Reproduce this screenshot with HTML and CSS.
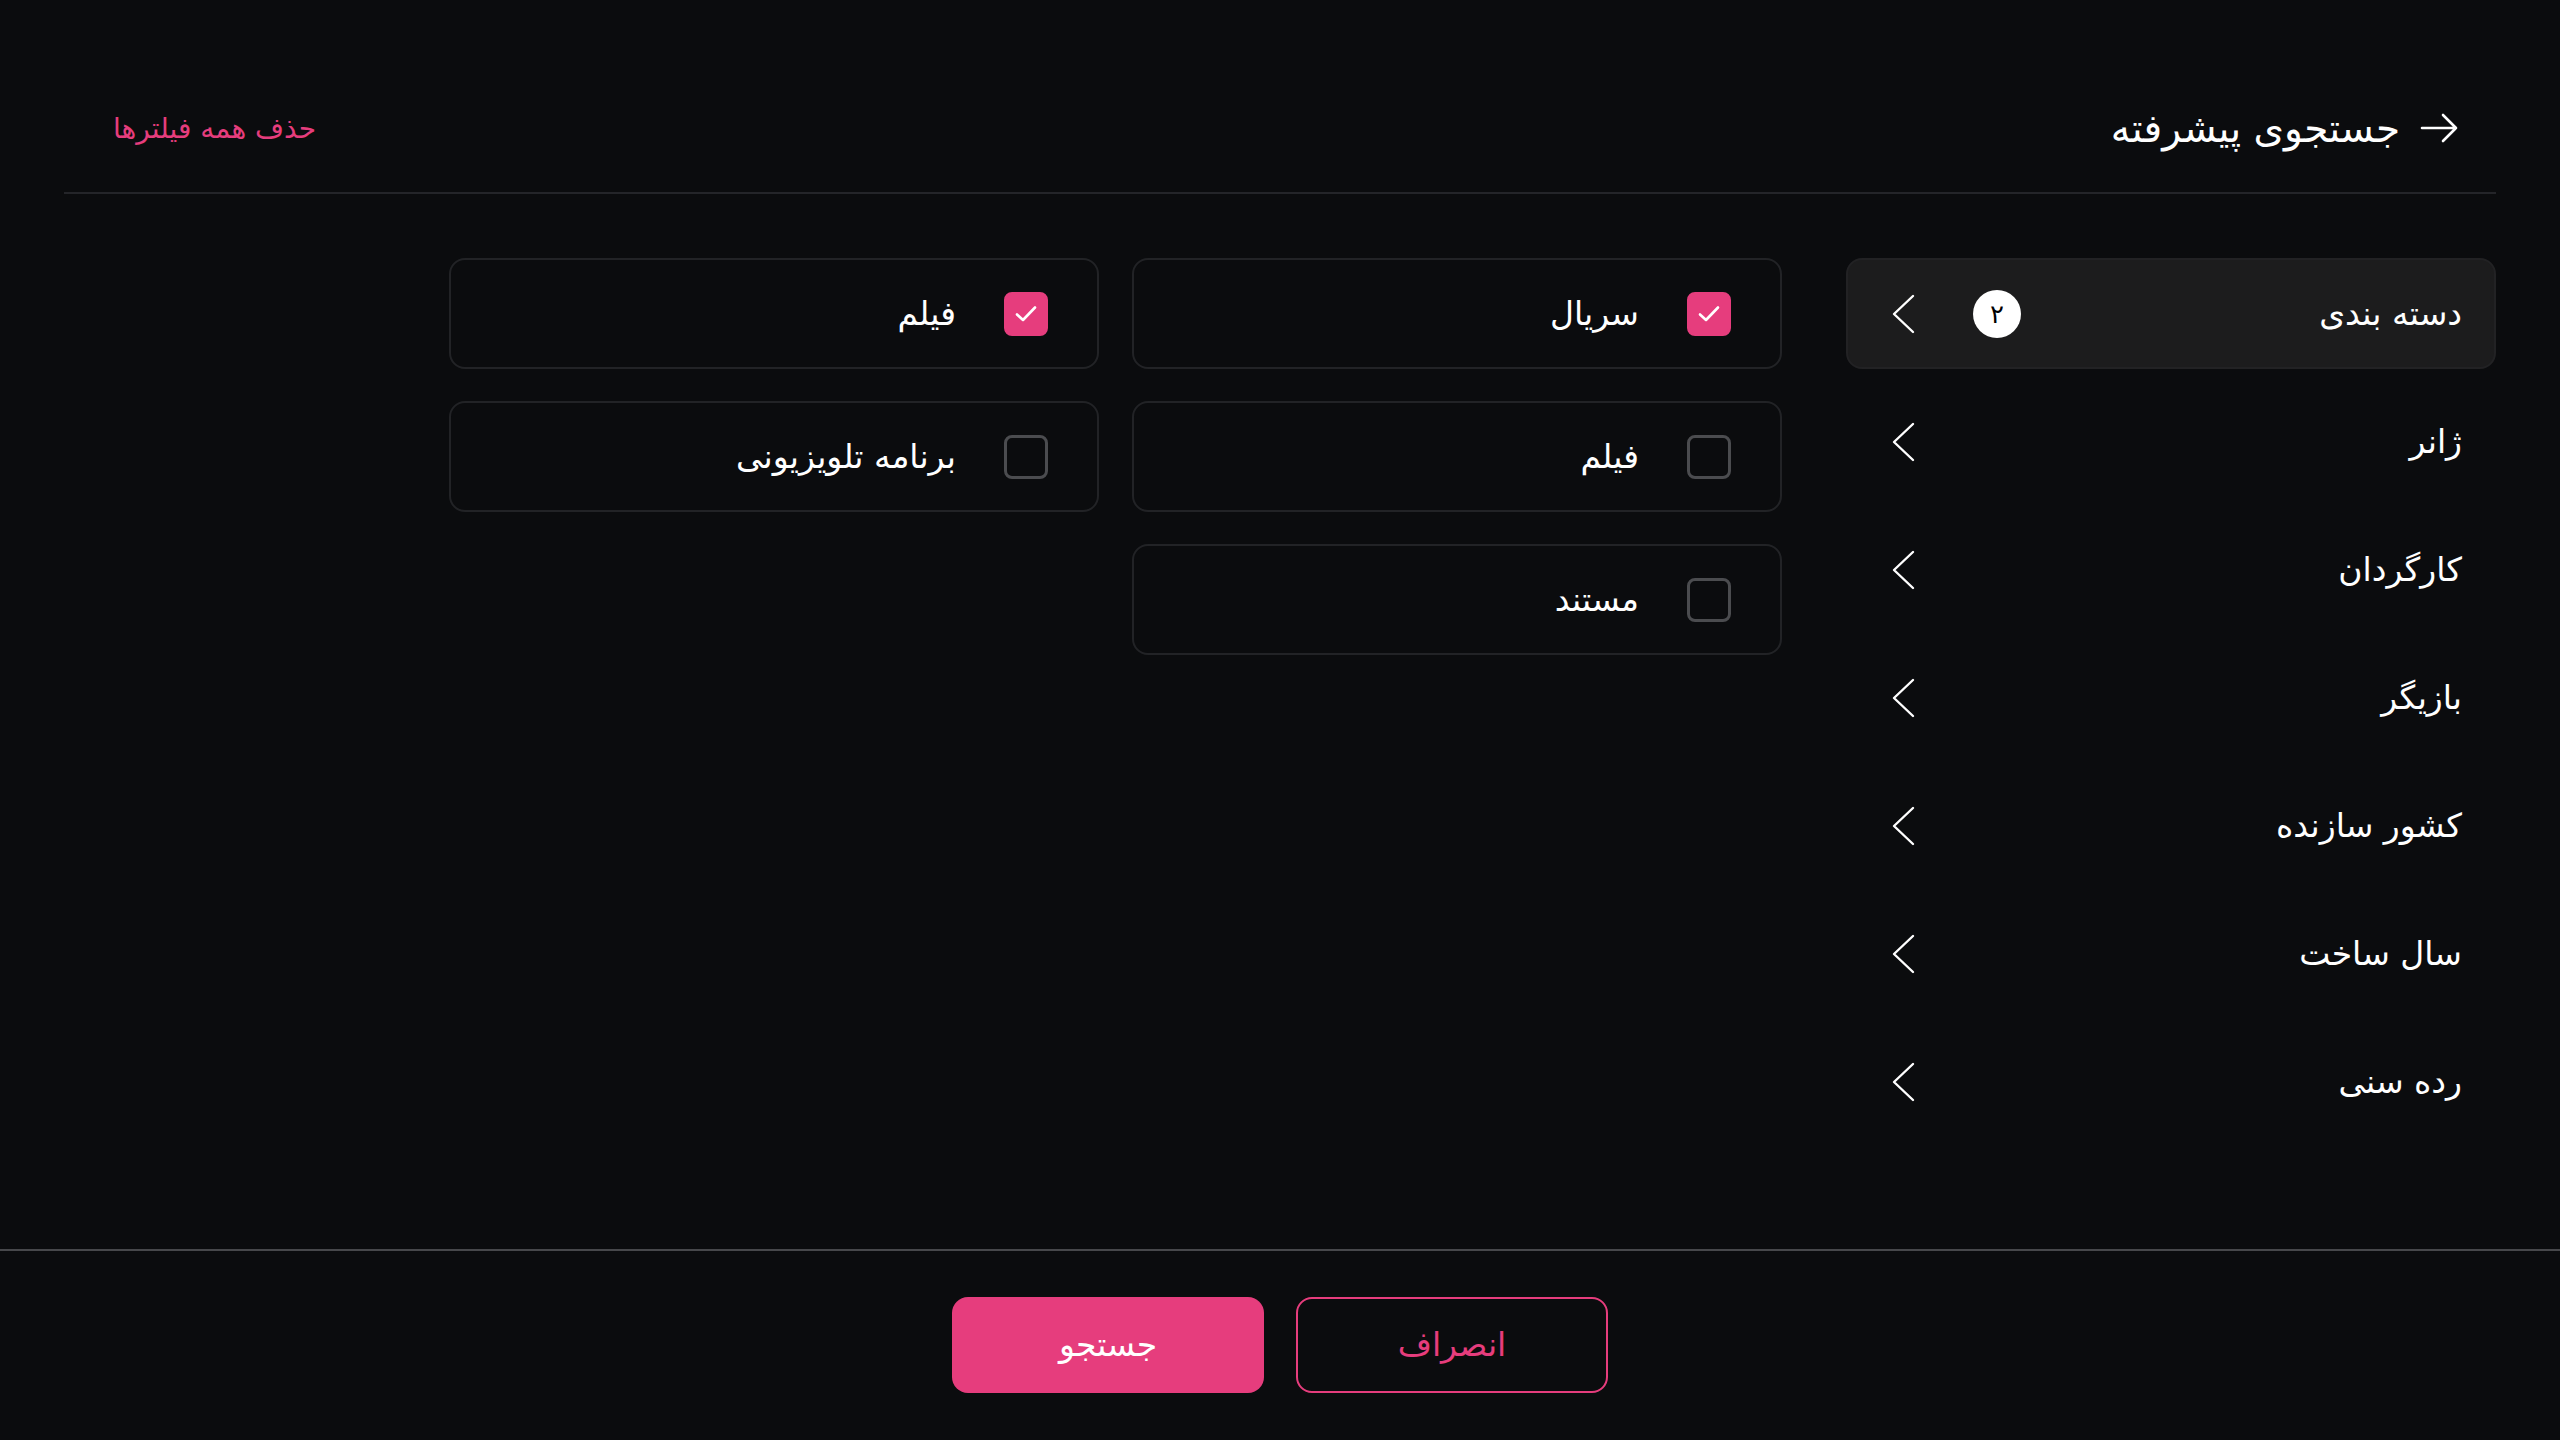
FILE: index.html
```html
<!DOCTYPE html>
<html lang="fa" dir="rtl">
<head>
  <meta charset="UTF-8" />
  <title>جستجوی پیشرفته</title>
  <meta name="viewport" content="width=device-width, initial-scale=1" />
  <link rel="stylesheet" href="styles.css">
</head>
<body>
  <div class="page">
    <header class="header">
      <div class="title">
        <svg class="back" width="40" height="30" viewBox="0 0 40 30">
          <path d="M2 15 H36 M23 2 L36 15 L23 28" fill="none" stroke="#fff" stroke-width="2.6" stroke-linecap="round" stroke-linejoin="round"/>
        </svg>
        <h1>جستجوی پیشرفته</h1>
      </div>
      <a class="clear" href="#">حذف همه فیلترها</a>
    </header>

    <main class="main">
      <ul class="sidebar">
        <li class="side-item active">
          <span>دسته بندی</span>
          <span class="badge">۲</span>
          <svg class="chev" width="24" height="40" viewBox="0 0 24 40"><path d="M22 2 L3 20 L22 38" fill="none" stroke="#fff" stroke-width="2.4" stroke-linecap="round" stroke-linejoin="round"/></svg>
        </li>
        <li class="side-item">
          <span>ژانر</span>
          <svg class="chev" width="24" height="40" viewBox="0 0 24 40"><path d="M22 2 L3 20 L22 38" fill="none" stroke="#fff" stroke-width="2.4" stroke-linecap="round" stroke-linejoin="round"/></svg>
        </li>
        <li class="side-item">
          <span>کارگردان</span>
          <svg class="chev" width="24" height="40" viewBox="0 0 24 40"><path d="M22 2 L3 20 L22 38" fill="none" stroke="#fff" stroke-width="2.4" stroke-linecap="round" stroke-linejoin="round"/></svg>
        </li>
        <li class="side-item">
          <span>بازیگر</span>
          <svg class="chev" width="24" height="40" viewBox="0 0 24 40"><path d="M22 2 L3 20 L22 38" fill="none" stroke="#fff" stroke-width="2.4" stroke-linecap="round" stroke-linejoin="round"/></svg>
        </li>
        <li class="side-item">
          <span>کشور سازنده</span>
          <svg class="chev" width="24" height="40" viewBox="0 0 24 40"><path d="M22 2 L3 20 L22 38" fill="none" stroke="#fff" stroke-width="2.4" stroke-linecap="round" stroke-linejoin="round"/></svg>
        </li>
        <li class="side-item">
          <span>سال ساخت</span>
          <svg class="chev" width="24" height="40" viewBox="0 0 24 40"><path d="M22 2 L3 20 L22 38" fill="none" stroke="#fff" stroke-width="2.4" stroke-linecap="round" stroke-linejoin="round"/></svg>
        </li>
        <li class="side-item">
          <span>رده سنی</span>
          <svg class="chev" width="24" height="40" viewBox="0 0 24 40"><path d="M22 2 L3 20 L22 38" fill="none" stroke="#fff" stroke-width="2.4" stroke-linecap="round" stroke-linejoin="round"/></svg>
        </li>
      </ul>

      <div class="options">
        <label class="option">
          <span class="box checked"><svg width="26" height="26" viewBox="0 0 26 26"><path d="M4 13.5 L10 19 L22 6.5" fill="none" stroke="#fff" stroke-width="2.6" stroke-linecap="round" stroke-linejoin="round"/></svg></span>
          <span>سریال</span>
        </label>
        <label class="option">
          <span class="box checked"><svg width="26" height="26" viewBox="0 0 26 26"><path d="M4 13.5 L10 19 L22 6.5" fill="none" stroke="#fff" stroke-width="2.6" stroke-linecap="round" stroke-linejoin="round"/></svg></span>
          <span>فیلم</span>
        </label>
        <label class="option">
          <span class="box"></span>
          <span>فیلم</span>
        </label>
        <label class="option">
          <span class="box"></span>
          <span>برنامه تلویزیونی</span>
        </label>
        <label class="option">
          <span class="box"></span>
          <span>مستند</span>
        </label>
      </div>
    </main>

    <footer class="footer">
      <button class="btn outline">انصراف</button>
      <button class="btn primary">جستجو</button>
    </footer>
  </div>
</body>
</html>
```

FILE: styles.css
```css
* { box-sizing: border-box; }
html, body { margin: 0; padding: 0; }
body { background: #0b0c0e; color: #fff; font-family: "DejaVu Sans", "Noto Sans", sans-serif; }

.page { height: 100vh; display: flex; flex-direction: column; }

.header { margin: 64px 64px 0; height: 130px; padding: 0 36px 0 49px; display: flex; align-items: center; justify-content: space-between; border-bottom: 2px solid #242529; }
.title { display: flex; align-items: center; gap: 20px; }
.title h1 { margin: 0; font-size: 39px; font-weight: normal; }
.back { order: -1; }
.clear { color: #e63d7d; text-decoration: none; font-size: 28px; }

.main { flex: 1; display: flex; gap: 64px; padding: 64px 64px 0; align-items: flex-start; }

.sidebar { list-style: none; margin: 0; padding: 0; width: 650px; display: flex; flex-direction: column; gap: 17px; }
.side-item { height: 111px; display: flex; align-items: center; padding: 0 32px 0 43px; font-size: 33px; border: 2px solid transparent; border-radius: 16px; }
.side-item.active { background: #1c1c1d; border-color: #222224; }
.side-item .badge { margin-right: auto; margin-left: 58px; width: 48px; height: 48px; border-radius: 50%; background: #fff; color: #000; font-size: 26px; display: flex; align-items: center; justify-content: center; }
.side-item span:first-child + .chev { margin-right: auto; }

.options { display: grid; grid-template-columns: repeat(2, 650px); gap: 32px 33px; }
.option { height: 111px; display: flex; align-items: center; gap: 48px; padding: 0 49px; border: 2px solid #222326; border-radius: 16px; font-size: 33px; }
.box { width: 44px; height: 44px; border: 3px solid #4b4c4f; border-radius: 8px; display: flex; align-items: center; justify-content: center; }
.box.checked { background: #e63d7d; border-color: #e63d7d; }

.footer { height: 191px; border-top: 2px solid #47484b; display: flex; justify-content: center; align-items: center; gap: 32px; padding-bottom: 2px; }
.btn { width: 312px; height: 96px; border-radius: 16px; font-family: inherit; font-size: 33px; cursor: pointer; }
.btn.primary { background: #e63d7d; border: none; color: #fff; }
.btn.outline { background: transparent; border: 2px solid #e63d7d; color: #e63d7d; }
```
